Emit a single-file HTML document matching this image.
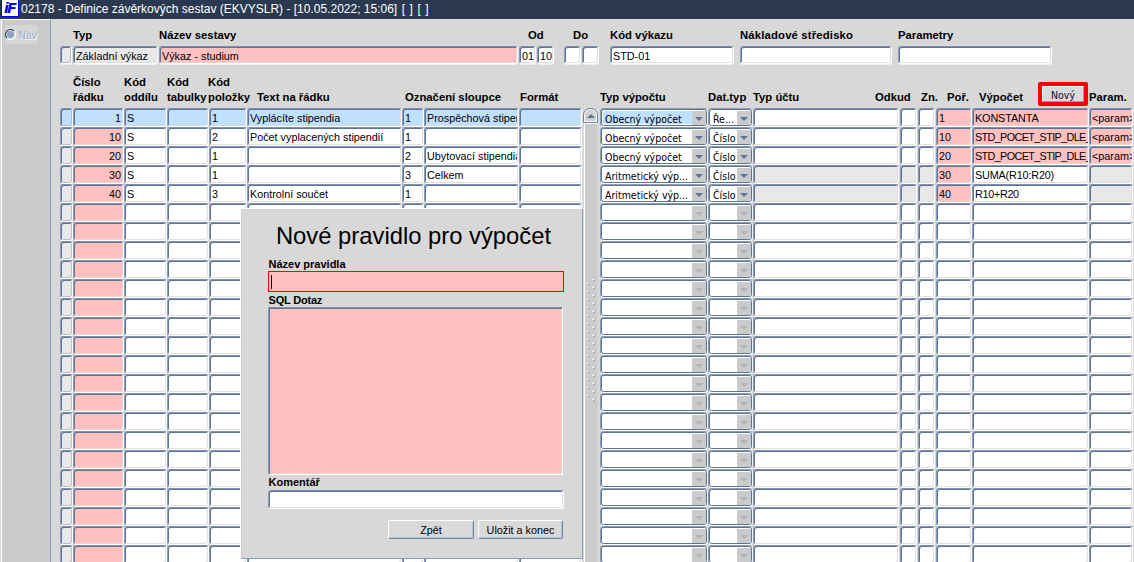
<!DOCTYPE html>
<html lang="cs"><head><meta charset="utf-8"><title>02178 - Definice závěrkových sestav</title>
<style>
html,body{margin:0;padding:0}
body{width:1134px;height:562px;overflow:hidden;background:#d8d8d8;font-family:"Liberation Sans",Arial,sans-serif;font-size:10.8px;color:#000;position:relative}
div,span{box-sizing:border-box}
.a{position:absolute}
#tb{left:0;top:0;width:1134px;height:19px;background:#2b3950;color:#fff;font-size:12px;line-height:17px;white-space:pre}
#ico{left:1px;top:-1px;width:18px;height:18px;background:#fdfdf5;border:1px solid #0000f0;color:#0000ff;font-weight:bold;font-style:italic;font-size:14px;line-height:16px;text-align:center;letter-spacing:-1px;overflow:hidden;text-shadow:.5px 0 0 #0000ff;padding-right:1px}
#lp{left:0;top:19px;width:51px;height:543px;background:#cbcbcb;border-left:1px solid #d8d8d8}
.f{position:absolute;height:19px;border-style:solid;border-width:1px;border-color:#8292ab #fff #fff #8c9cb4;border-radius:3px;background:#fff;box-shadow:inset 1px 1px 0 #5f7494,inset -1px -1px 0 rgba(218,218,218,.85);white-space:nowrap;overflow:hidden;line-height:17px;padding:1px 0 0 2px}
.f u{display:block;overflow:hidden;text-decoration:none;margin-right:1px}
.f.i{box-shadow:inset 1px 1px 0 #5f7494,inset -1px -1px 0 rgba(120,135,160,.4);border-radius:3px}
.f.h.i{box-shadow:inset 1px 1px 0 #5f7494,inset -1px -1px 0 rgba(120,135,160,.45),0 1px 0 rgba(255,255,255,.6)!important}
.f.r{text-align:right;padding-right:2px;padding-left:0}
.f.h{height:18px;line-height:16px;box-shadow:inset 1px 1px 0 #5f7494,inset -1px -1px 0 rgba(218,218,218,.85),0 1px 0 rgba(255,255,255,.6)}
.p{background:#ffc0c0}.b{background:#c0e0ff}.g{background:#e8e8e8}
.l{position:absolute;font-weight:bold;font-size:11.3px;line-height:15px;white-space:nowrap}
.dd{position:absolute;height:17px;border:1px solid #5f7494;border-radius:2.5px;background:#fff;box-shadow:0 1px 0 #fff,1px 0 0 rgba(255,255,255,.65),0 -1px 0 rgba(95,116,148,.6),-1px 0 0 rgba(95,116,148,.6),inset 0 0 0 1px #fff;white-space:nowrap;overflow:hidden;line-height:15px;padding:2px 0 0 3px;font-family:"DejaVu Sans","Liberation Sans",sans-serif;font-stretch:condensed;font-size:10.5px}
.dd.b{background:#c0e0ff}
.dd i{position:absolute;right:0;top:1px;bottom:0;width:14px;background:#cbcbcb}
.dd i:after{content:"";position:absolute;left:3px;top:6px;border-left:4px solid transparent;border-right:4px solid transparent;border-top:4px solid #5e7596}
.dd.e i:after{border-top-color:#b4b4b4}
</style></head>
<body>
<div id="tb" class="a"><span class="a" style="left:21px;top:1px">02178 - Definice závěrkových sestav (EKVYSLR) - [10.05.2022; 15:06]<span style="word-spacing:1.2px"> [ ] [ ]</span></span></div>
<div id="ico" class="a">iF</div>
<div id="lp" class="a"></div>
<div class="a" style="left:1px;top:19px;width:1px;height:543px;background:#fff"></div>
<div class="a" style="left:1px;top:19px;width:49px;height:1px;background:#fff"></div>
<div class="a" style="left:50px;top:20px;width:1px;height:542px;background:#8799b5"></div>
<div class="a" style="left:5px;top:25px;width:32px;height:19px;background:#d6d6d6"></div>
<div class="a" style="left:5px;top:29px;width:11px;height:11px;border-radius:50%;background:#8ea3c0;border:1px solid;border-color:#2a3850 #fff #fff #2a3850;box-shadow:0 0 0 1px #dcdcdc inset"></div>
<div class="a" style="left:18.5px;top:28px;font-size:10.3px;line-height:15px;color:#8fa6c8;text-shadow:1px 1px 0 #fff">Nav</div>
<div class="l" style="left:73px;top:28px">Typ</div>
<div class="l" style="left:159px;top:28px">Název sestavy</div>
<div class="l" style="left:528px;top:28px">Od</div>
<div class="l" style="left:573px;top:28px">Do</div>
<div class="l" style="left:610px;top:28px">Kód výkazu</div>
<div class="l" style="left:740px;top:28px;letter-spacing:.17px">Nákladové středisko</div>
<div class="l" style="left:898px;top:28px">Parametry</div>
<div class="f g h i" style="left:60px;top:46px;width:12px"></div>
<div class="f g h" style="left:73px;top:46px;width:85px">Základní výkaz</div>
<div class="f p h" style="left:159px;top:46px;width:359px">Výkaz - studium</div>
<div class="f h" style="left:519px;top:46px;width:17px">01</div>
<div class="f h" style="left:537px;top:46px;width:17px">10</div>
<div class="f h" style="left:564px;top:46px;width:17px"></div>
<div class="f h" style="left:582px;top:46px;width:17px"></div>
<div class="f h" style="left:610px;top:46px;width:124px">STD-01</div>
<div class="f h" style="left:740px;top:46px;width:152px"></div>
<div class="f h" style="left:898px;top:46px;width:154px"></div>
<div class="l" style="left:73px;top:75px">Číslo</div>
<div class="l" style="left:73px;top:90px">řádku</div>
<div class="l" style="left:124px;top:75px">Kód</div>
<div class="l" style="left:124px;top:90px">oddílu</div>
<div class="l" style="left:167px;top:75px">Kód</div>
<div class="l" style="left:167px;top:90px">tabulky</div>
<div class="l" style="left:208px;top:75px">Kód</div>
<div class="l" style="left:208px;top:90px">položky</div>
<div class="l" style="left:257px;top:90px">Text na řádku</div>
<div class="l" style="left:405px;top:90px">Označení sloupce</div>
<div class="l" style="left:520px;top:90px">Formát</div>
<div class="l" style="left:600px;top:90px">Typ výpočtu</div>
<div class="l" style="left:708px;top:90px">Dat.typ</div>
<div class="l" style="left:753px;top:90px">Typ účtu</div>
<div class="l" style="left:875px;top:90px">Odkud</div>
<div class="l" style="left:921px;top:90px">Zn.</div>
<div class="l" style="left:947px;top:90px">Poř.</div>
<div class="l" style="left:979px;top:90px">Výpočet</div>
<div class="l" style="left:1089px;top:90px">Param.</div>
<div class="f b i" style="left:60px;top:108px;width:13px"></div>
<div class="f b r" style="left:73px;top:108px;width:51px">1</div>
<div class="f b" style="left:124px;top:108px;width:43px">S</div>
<div class="f b" style="left:167px;top:108px;width:42px"></div>
<div class="f b" style="left:209px;top:108px;width:38px">1</div>
<div class="f b" style="left:247px;top:108px;width:155px">Vyplácíte stipendia</div>
<div class="f b" style="left:402px;top:108px;width:22px">1</div>
<div class="f b" style="left:424px;top:108px;width:95px"><u>Prospěchová stipendia</u></div>
<div class="f b" style="left:519px;top:108px;width:63px"></div>
<div class="dd b" style="left:601px;top:109px;width:106px">Obecný výpočet<i></i></div>
<div class="dd " style="left:709px;top:109px;width:43px">Ře...<i></i></div>
<div class="f " style="left:753px;top:108px;width:146px"></div>
<div class="f " style="left:900px;top:108px;width:17px"></div>
<div class="f " style="left:918px;top:108px;width:17px"></div>
<div class="f p" style="left:936px;top:108px;width:36px">1</div>
<div class="f p" style="left:972px;top:108px;width:117px"><span style="letter-spacing:-.1px">KONSTANTA</span></div>
<div class="f p" style="left:1089px;top:108px;width:44px">&lt;param&gt;</div>
<div class="f g i" style="left:60px;top:127px;width:13px"></div>
<div class="f p r" style="left:73px;top:127px;width:51px">10</div>
<div class="f " style="left:124px;top:127px;width:43px">S</div>
<div class="f " style="left:167px;top:127px;width:42px"></div>
<div class="f " style="left:209px;top:127px;width:38px">2</div>
<div class="f " style="left:247px;top:127px;width:155px">Počet vyplacených stipendií</div>
<div class="f " style="left:402px;top:127px;width:22px">1</div>
<div class="f " style="left:424px;top:127px;width:95px"></div>
<div class="f " style="left:519px;top:127px;width:63px"></div>
<div class="dd " style="left:601px;top:128px;width:106px">Obecný výpočet<i></i></div>
<div class="dd " style="left:709px;top:128px;width:43px">Číslo<i></i></div>
<div class="f " style="left:753px;top:127px;width:146px"></div>
<div class="f " style="left:900px;top:127px;width:17px"></div>
<div class="f " style="left:918px;top:127px;width:17px"></div>
<div class="f p" style="left:936px;top:127px;width:36px">10</div>
<div class="f p" style="left:972px;top:127px;width:117px"><span style="letter-spacing:-.62px">STD_POCET_STIP_DLE_</span></div>
<div class="f p" style="left:1089px;top:127px;width:44px">&lt;param&gt;</div>
<div class="f g i" style="left:60px;top:146px;width:13px"></div>
<div class="f p r" style="left:73px;top:146px;width:51px">20</div>
<div class="f " style="left:124px;top:146px;width:43px">S</div>
<div class="f " style="left:167px;top:146px;width:42px"></div>
<div class="f " style="left:209px;top:146px;width:38px">1</div>
<div class="f " style="left:247px;top:146px;width:155px"></div>
<div class="f " style="left:402px;top:146px;width:22px">2</div>
<div class="f " style="left:424px;top:146px;width:95px"><u>Ubytovací stipendia</u></div>
<div class="f " style="left:519px;top:146px;width:63px"></div>
<div class="dd " style="left:601px;top:147px;width:106px">Obecný výpočet<i></i></div>
<div class="dd " style="left:709px;top:147px;width:43px">Číslo<i></i></div>
<div class="f " style="left:753px;top:146px;width:146px"></div>
<div class="f " style="left:900px;top:146px;width:17px"></div>
<div class="f " style="left:918px;top:146px;width:17px"></div>
<div class="f p" style="left:936px;top:146px;width:36px">20</div>
<div class="f p" style="left:972px;top:146px;width:117px"><span style="letter-spacing:-.62px">STD_POCET_STIP_DLE_</span></div>
<div class="f p" style="left:1089px;top:146px;width:44px">&lt;param&gt;</div>
<div class="f g i" style="left:60px;top:165px;width:13px"></div>
<div class="f p r" style="left:73px;top:165px;width:51px">30</div>
<div class="f " style="left:124px;top:165px;width:43px">S</div>
<div class="f " style="left:167px;top:165px;width:42px"></div>
<div class="f " style="left:209px;top:165px;width:38px">1</div>
<div class="f " style="left:247px;top:165px;width:155px"></div>
<div class="f " style="left:402px;top:165px;width:22px">3</div>
<div class="f " style="left:424px;top:165px;width:95px">Celkem</div>
<div class="f " style="left:519px;top:165px;width:63px"></div>
<div class="dd " style="left:601px;top:166px;width:106px">Aritmetický výp...<i></i></div>
<div class="dd " style="left:709px;top:166px;width:43px">Číslo<i></i></div>
<div class="f g" style="left:753px;top:165px;width:146px"></div>
<div class="f g" style="left:900px;top:165px;width:17px"></div>
<div class="f g" style="left:918px;top:165px;width:17px"></div>
<div class="f p" style="left:936px;top:165px;width:36px">30</div>
<div class="f " style="left:972px;top:165px;width:117px"><span style="letter-spacing:-.15px">SUMA(R10:R20)</span></div>
<div class="f g" style="left:1089px;top:165px;width:44px"></div>
<div class="f g i" style="left:60px;top:184px;width:13px"></div>
<div class="f p r" style="left:73px;top:184px;width:51px">40</div>
<div class="f " style="left:124px;top:184px;width:43px">S</div>
<div class="f " style="left:167px;top:184px;width:42px"></div>
<div class="f " style="left:209px;top:184px;width:38px">3</div>
<div class="f " style="left:247px;top:184px;width:155px">Kontrolní součet</div>
<div class="f " style="left:402px;top:184px;width:22px">1</div>
<div class="f " style="left:424px;top:184px;width:95px"></div>
<div class="f " style="left:519px;top:184px;width:63px"></div>
<div class="dd " style="left:601px;top:185px;width:106px">Aritmetický výp...<i></i></div>
<div class="dd " style="left:709px;top:185px;width:43px">Číslo<i></i></div>
<div class="f g" style="left:753px;top:184px;width:146px"></div>
<div class="f g" style="left:900px;top:184px;width:17px"></div>
<div class="f g" style="left:918px;top:184px;width:17px"></div>
<div class="f p" style="left:936px;top:184px;width:36px">40</div>
<div class="f " style="left:972px;top:184px;width:117px"><span style="letter-spacing:-.3px">R10+R20</span></div>
<div class="f g" style="left:1089px;top:184px;width:44px"></div>
<div class="f g i" style="left:60px;top:203px;width:13px"></div>
<div class="f p r" style="left:73px;top:203px;width:51px"></div>
<div class="f " style="left:124px;top:203px;width:43px"></div>
<div class="f " style="left:167px;top:203px;width:42px"></div>
<div class="f " style="left:209px;top:203px;width:38px"></div>
<div class="f " style="left:247px;top:203px;width:155px"></div>
<div class="f " style="left:402px;top:203px;width:22px"></div>
<div class="f " style="left:424px;top:203px;width:95px"></div>
<div class="f " style="left:519px;top:203px;width:63px"></div>
<div class="dd  e" style="left:601px;top:204px;width:106px"><i></i></div>
<div class="dd  e" style="left:709px;top:204px;width:43px"><i></i></div>
<div class="f " style="left:753px;top:203px;width:146px"></div>
<div class="f " style="left:900px;top:203px;width:17px"></div>
<div class="f " style="left:918px;top:203px;width:17px"></div>
<div class="f " style="left:936px;top:203px;width:36px"></div>
<div class="f " style="left:972px;top:203px;width:117px"></div>
<div class="f " style="left:1089px;top:203px;width:44px"></div>
<div class="f g i" style="left:60px;top:222px;width:13px"></div>
<div class="f p r" style="left:73px;top:222px;width:51px"></div>
<div class="f " style="left:124px;top:222px;width:43px"></div>
<div class="f " style="left:167px;top:222px;width:42px"></div>
<div class="f " style="left:209px;top:222px;width:38px"></div>
<div class="f " style="left:247px;top:222px;width:155px"></div>
<div class="f " style="left:402px;top:222px;width:22px"></div>
<div class="f " style="left:424px;top:222px;width:95px"></div>
<div class="f " style="left:519px;top:222px;width:63px"></div>
<div class="dd  e" style="left:601px;top:223px;width:106px"><i></i></div>
<div class="dd  e" style="left:709px;top:223px;width:43px"><i></i></div>
<div class="f " style="left:753px;top:222px;width:146px"></div>
<div class="f " style="left:900px;top:222px;width:17px"></div>
<div class="f " style="left:918px;top:222px;width:17px"></div>
<div class="f " style="left:936px;top:222px;width:36px"></div>
<div class="f " style="left:972px;top:222px;width:117px"></div>
<div class="f " style="left:1089px;top:222px;width:44px"></div>
<div class="f g i" style="left:60px;top:241px;width:13px"></div>
<div class="f p r" style="left:73px;top:241px;width:51px"></div>
<div class="f " style="left:124px;top:241px;width:43px"></div>
<div class="f " style="left:167px;top:241px;width:42px"></div>
<div class="f " style="left:209px;top:241px;width:38px"></div>
<div class="f " style="left:247px;top:241px;width:155px"></div>
<div class="f " style="left:402px;top:241px;width:22px"></div>
<div class="f " style="left:424px;top:241px;width:95px"></div>
<div class="f " style="left:519px;top:241px;width:63px"></div>
<div class="dd  e" style="left:601px;top:242px;width:106px"><i></i></div>
<div class="dd  e" style="left:709px;top:242px;width:43px"><i></i></div>
<div class="f " style="left:753px;top:241px;width:146px"></div>
<div class="f " style="left:900px;top:241px;width:17px"></div>
<div class="f " style="left:918px;top:241px;width:17px"></div>
<div class="f " style="left:936px;top:241px;width:36px"></div>
<div class="f " style="left:972px;top:241px;width:117px"></div>
<div class="f " style="left:1089px;top:241px;width:44px"></div>
<div class="f g i" style="left:60px;top:260px;width:13px"></div>
<div class="f p r" style="left:73px;top:260px;width:51px"></div>
<div class="f " style="left:124px;top:260px;width:43px"></div>
<div class="f " style="left:167px;top:260px;width:42px"></div>
<div class="f " style="left:209px;top:260px;width:38px"></div>
<div class="f " style="left:247px;top:260px;width:155px"></div>
<div class="f " style="left:402px;top:260px;width:22px"></div>
<div class="f " style="left:424px;top:260px;width:95px"></div>
<div class="f " style="left:519px;top:260px;width:63px"></div>
<div class="dd  e" style="left:601px;top:261px;width:106px"><i></i></div>
<div class="dd  e" style="left:709px;top:261px;width:43px"><i></i></div>
<div class="f " style="left:753px;top:260px;width:146px"></div>
<div class="f " style="left:900px;top:260px;width:17px"></div>
<div class="f " style="left:918px;top:260px;width:17px"></div>
<div class="f " style="left:936px;top:260px;width:36px"></div>
<div class="f " style="left:972px;top:260px;width:117px"></div>
<div class="f " style="left:1089px;top:260px;width:44px"></div>
<div class="f g i" style="left:60px;top:279px;width:13px"></div>
<div class="f p r" style="left:73px;top:279px;width:51px"></div>
<div class="f " style="left:124px;top:279px;width:43px"></div>
<div class="f " style="left:167px;top:279px;width:42px"></div>
<div class="f " style="left:209px;top:279px;width:38px"></div>
<div class="f " style="left:247px;top:279px;width:155px"></div>
<div class="f " style="left:402px;top:279px;width:22px"></div>
<div class="f " style="left:424px;top:279px;width:95px"></div>
<div class="f " style="left:519px;top:279px;width:63px"></div>
<div class="dd  e" style="left:601px;top:280px;width:106px"><i></i></div>
<div class="dd  e" style="left:709px;top:280px;width:43px"><i></i></div>
<div class="f " style="left:753px;top:279px;width:146px"></div>
<div class="f " style="left:900px;top:279px;width:17px"></div>
<div class="f " style="left:918px;top:279px;width:17px"></div>
<div class="f " style="left:936px;top:279px;width:36px"></div>
<div class="f " style="left:972px;top:279px;width:117px"></div>
<div class="f " style="left:1089px;top:279px;width:44px"></div>
<div class="f g i" style="left:60px;top:298px;width:13px"></div>
<div class="f p r" style="left:73px;top:298px;width:51px"></div>
<div class="f " style="left:124px;top:298px;width:43px"></div>
<div class="f " style="left:167px;top:298px;width:42px"></div>
<div class="f " style="left:209px;top:298px;width:38px"></div>
<div class="f " style="left:247px;top:298px;width:155px"></div>
<div class="f " style="left:402px;top:298px;width:22px"></div>
<div class="f " style="left:424px;top:298px;width:95px"></div>
<div class="f " style="left:519px;top:298px;width:63px"></div>
<div class="dd  e" style="left:601px;top:299px;width:106px"><i></i></div>
<div class="dd  e" style="left:709px;top:299px;width:43px"><i></i></div>
<div class="f " style="left:753px;top:298px;width:146px"></div>
<div class="f " style="left:900px;top:298px;width:17px"></div>
<div class="f " style="left:918px;top:298px;width:17px"></div>
<div class="f " style="left:936px;top:298px;width:36px"></div>
<div class="f " style="left:972px;top:298px;width:117px"></div>
<div class="f " style="left:1089px;top:298px;width:44px"></div>
<div class="f g i" style="left:60px;top:317px;width:13px"></div>
<div class="f p r" style="left:73px;top:317px;width:51px"></div>
<div class="f " style="left:124px;top:317px;width:43px"></div>
<div class="f " style="left:167px;top:317px;width:42px"></div>
<div class="f " style="left:209px;top:317px;width:38px"></div>
<div class="f " style="left:247px;top:317px;width:155px"></div>
<div class="f " style="left:402px;top:317px;width:22px"></div>
<div class="f " style="left:424px;top:317px;width:95px"></div>
<div class="f " style="left:519px;top:317px;width:63px"></div>
<div class="dd  e" style="left:601px;top:318px;width:106px"><i></i></div>
<div class="dd  e" style="left:709px;top:318px;width:43px"><i></i></div>
<div class="f " style="left:753px;top:317px;width:146px"></div>
<div class="f " style="left:900px;top:317px;width:17px"></div>
<div class="f " style="left:918px;top:317px;width:17px"></div>
<div class="f " style="left:936px;top:317px;width:36px"></div>
<div class="f " style="left:972px;top:317px;width:117px"></div>
<div class="f " style="left:1089px;top:317px;width:44px"></div>
<div class="f g i" style="left:60px;top:336px;width:13px"></div>
<div class="f p r" style="left:73px;top:336px;width:51px"></div>
<div class="f " style="left:124px;top:336px;width:43px"></div>
<div class="f " style="left:167px;top:336px;width:42px"></div>
<div class="f " style="left:209px;top:336px;width:38px"></div>
<div class="f " style="left:247px;top:336px;width:155px"></div>
<div class="f " style="left:402px;top:336px;width:22px"></div>
<div class="f " style="left:424px;top:336px;width:95px"></div>
<div class="f " style="left:519px;top:336px;width:63px"></div>
<div class="dd  e" style="left:601px;top:337px;width:106px"><i></i></div>
<div class="dd  e" style="left:709px;top:337px;width:43px"><i></i></div>
<div class="f " style="left:753px;top:336px;width:146px"></div>
<div class="f " style="left:900px;top:336px;width:17px"></div>
<div class="f " style="left:918px;top:336px;width:17px"></div>
<div class="f " style="left:936px;top:336px;width:36px"></div>
<div class="f " style="left:972px;top:336px;width:117px"></div>
<div class="f " style="left:1089px;top:336px;width:44px"></div>
<div class="f g i" style="left:60px;top:355px;width:13px"></div>
<div class="f p r" style="left:73px;top:355px;width:51px"></div>
<div class="f " style="left:124px;top:355px;width:43px"></div>
<div class="f " style="left:167px;top:355px;width:42px"></div>
<div class="f " style="left:209px;top:355px;width:38px"></div>
<div class="f " style="left:247px;top:355px;width:155px"></div>
<div class="f " style="left:402px;top:355px;width:22px"></div>
<div class="f " style="left:424px;top:355px;width:95px"></div>
<div class="f " style="left:519px;top:355px;width:63px"></div>
<div class="dd  e" style="left:601px;top:356px;width:106px"><i></i></div>
<div class="dd  e" style="left:709px;top:356px;width:43px"><i></i></div>
<div class="f " style="left:753px;top:355px;width:146px"></div>
<div class="f " style="left:900px;top:355px;width:17px"></div>
<div class="f " style="left:918px;top:355px;width:17px"></div>
<div class="f " style="left:936px;top:355px;width:36px"></div>
<div class="f " style="left:972px;top:355px;width:117px"></div>
<div class="f " style="left:1089px;top:355px;width:44px"></div>
<div class="f g i" style="left:60px;top:374px;width:13px"></div>
<div class="f p r" style="left:73px;top:374px;width:51px"></div>
<div class="f " style="left:124px;top:374px;width:43px"></div>
<div class="f " style="left:167px;top:374px;width:42px"></div>
<div class="f " style="left:209px;top:374px;width:38px"></div>
<div class="f " style="left:247px;top:374px;width:155px"></div>
<div class="f " style="left:402px;top:374px;width:22px"></div>
<div class="f " style="left:424px;top:374px;width:95px"></div>
<div class="f " style="left:519px;top:374px;width:63px"></div>
<div class="dd  e" style="left:601px;top:375px;width:106px"><i></i></div>
<div class="dd  e" style="left:709px;top:375px;width:43px"><i></i></div>
<div class="f " style="left:753px;top:374px;width:146px"></div>
<div class="f " style="left:900px;top:374px;width:17px"></div>
<div class="f " style="left:918px;top:374px;width:17px"></div>
<div class="f " style="left:936px;top:374px;width:36px"></div>
<div class="f " style="left:972px;top:374px;width:117px"></div>
<div class="f " style="left:1089px;top:374px;width:44px"></div>
<div class="f g i" style="left:60px;top:393px;width:13px"></div>
<div class="f p r" style="left:73px;top:393px;width:51px"></div>
<div class="f " style="left:124px;top:393px;width:43px"></div>
<div class="f " style="left:167px;top:393px;width:42px"></div>
<div class="f " style="left:209px;top:393px;width:38px"></div>
<div class="f " style="left:247px;top:393px;width:155px"></div>
<div class="f " style="left:402px;top:393px;width:22px"></div>
<div class="f " style="left:424px;top:393px;width:95px"></div>
<div class="f " style="left:519px;top:393px;width:63px"></div>
<div class="dd  e" style="left:601px;top:394px;width:106px"><i></i></div>
<div class="dd  e" style="left:709px;top:394px;width:43px"><i></i></div>
<div class="f " style="left:753px;top:393px;width:146px"></div>
<div class="f " style="left:900px;top:393px;width:17px"></div>
<div class="f " style="left:918px;top:393px;width:17px"></div>
<div class="f " style="left:936px;top:393px;width:36px"></div>
<div class="f " style="left:972px;top:393px;width:117px"></div>
<div class="f " style="left:1089px;top:393px;width:44px"></div>
<div class="f g i" style="left:60px;top:412px;width:13px"></div>
<div class="f p r" style="left:73px;top:412px;width:51px"></div>
<div class="f " style="left:124px;top:412px;width:43px"></div>
<div class="f " style="left:167px;top:412px;width:42px"></div>
<div class="f " style="left:209px;top:412px;width:38px"></div>
<div class="f " style="left:247px;top:412px;width:155px"></div>
<div class="f " style="left:402px;top:412px;width:22px"></div>
<div class="f " style="left:424px;top:412px;width:95px"></div>
<div class="f " style="left:519px;top:412px;width:63px"></div>
<div class="dd  e" style="left:601px;top:413px;width:106px"><i></i></div>
<div class="dd  e" style="left:709px;top:413px;width:43px"><i></i></div>
<div class="f " style="left:753px;top:412px;width:146px"></div>
<div class="f " style="left:900px;top:412px;width:17px"></div>
<div class="f " style="left:918px;top:412px;width:17px"></div>
<div class="f " style="left:936px;top:412px;width:36px"></div>
<div class="f " style="left:972px;top:412px;width:117px"></div>
<div class="f " style="left:1089px;top:412px;width:44px"></div>
<div class="f g i" style="left:60px;top:431px;width:13px"></div>
<div class="f p r" style="left:73px;top:431px;width:51px"></div>
<div class="f " style="left:124px;top:431px;width:43px"></div>
<div class="f " style="left:167px;top:431px;width:42px"></div>
<div class="f " style="left:209px;top:431px;width:38px"></div>
<div class="f " style="left:247px;top:431px;width:155px"></div>
<div class="f " style="left:402px;top:431px;width:22px"></div>
<div class="f " style="left:424px;top:431px;width:95px"></div>
<div class="f " style="left:519px;top:431px;width:63px"></div>
<div class="dd  e" style="left:601px;top:432px;width:106px"><i></i></div>
<div class="dd  e" style="left:709px;top:432px;width:43px"><i></i></div>
<div class="f " style="left:753px;top:431px;width:146px"></div>
<div class="f " style="left:900px;top:431px;width:17px"></div>
<div class="f " style="left:918px;top:431px;width:17px"></div>
<div class="f " style="left:936px;top:431px;width:36px"></div>
<div class="f " style="left:972px;top:431px;width:117px"></div>
<div class="f " style="left:1089px;top:431px;width:44px"></div>
<div class="f g i" style="left:60px;top:450px;width:13px"></div>
<div class="f p r" style="left:73px;top:450px;width:51px"></div>
<div class="f " style="left:124px;top:450px;width:43px"></div>
<div class="f " style="left:167px;top:450px;width:42px"></div>
<div class="f " style="left:209px;top:450px;width:38px"></div>
<div class="f " style="left:247px;top:450px;width:155px"></div>
<div class="f " style="left:402px;top:450px;width:22px"></div>
<div class="f " style="left:424px;top:450px;width:95px"></div>
<div class="f " style="left:519px;top:450px;width:63px"></div>
<div class="dd  e" style="left:601px;top:451px;width:106px"><i></i></div>
<div class="dd  e" style="left:709px;top:451px;width:43px"><i></i></div>
<div class="f " style="left:753px;top:450px;width:146px"></div>
<div class="f " style="left:900px;top:450px;width:17px"></div>
<div class="f " style="left:918px;top:450px;width:17px"></div>
<div class="f " style="left:936px;top:450px;width:36px"></div>
<div class="f " style="left:972px;top:450px;width:117px"></div>
<div class="f " style="left:1089px;top:450px;width:44px"></div>
<div class="f g i" style="left:60px;top:469px;width:13px"></div>
<div class="f p r" style="left:73px;top:469px;width:51px"></div>
<div class="f " style="left:124px;top:469px;width:43px"></div>
<div class="f " style="left:167px;top:469px;width:42px"></div>
<div class="f " style="left:209px;top:469px;width:38px"></div>
<div class="f " style="left:247px;top:469px;width:155px"></div>
<div class="f " style="left:402px;top:469px;width:22px"></div>
<div class="f " style="left:424px;top:469px;width:95px"></div>
<div class="f " style="left:519px;top:469px;width:63px"></div>
<div class="dd  e" style="left:601px;top:470px;width:106px"><i></i></div>
<div class="dd  e" style="left:709px;top:470px;width:43px"><i></i></div>
<div class="f " style="left:753px;top:469px;width:146px"></div>
<div class="f " style="left:900px;top:469px;width:17px"></div>
<div class="f " style="left:918px;top:469px;width:17px"></div>
<div class="f " style="left:936px;top:469px;width:36px"></div>
<div class="f " style="left:972px;top:469px;width:117px"></div>
<div class="f " style="left:1089px;top:469px;width:44px"></div>
<div class="f g i" style="left:60px;top:488px;width:13px"></div>
<div class="f p r" style="left:73px;top:488px;width:51px"></div>
<div class="f " style="left:124px;top:488px;width:43px"></div>
<div class="f " style="left:167px;top:488px;width:42px"></div>
<div class="f " style="left:209px;top:488px;width:38px"></div>
<div class="f " style="left:247px;top:488px;width:155px"></div>
<div class="f " style="left:402px;top:488px;width:22px"></div>
<div class="f " style="left:424px;top:488px;width:95px"></div>
<div class="f " style="left:519px;top:488px;width:63px"></div>
<div class="dd  e" style="left:601px;top:489px;width:106px"><i></i></div>
<div class="dd  e" style="left:709px;top:489px;width:43px"><i></i></div>
<div class="f " style="left:753px;top:488px;width:146px"></div>
<div class="f " style="left:900px;top:488px;width:17px"></div>
<div class="f " style="left:918px;top:488px;width:17px"></div>
<div class="f " style="left:936px;top:488px;width:36px"></div>
<div class="f " style="left:972px;top:488px;width:117px"></div>
<div class="f " style="left:1089px;top:488px;width:44px"></div>
<div class="f g i" style="left:60px;top:507px;width:13px"></div>
<div class="f p r" style="left:73px;top:507px;width:51px"></div>
<div class="f " style="left:124px;top:507px;width:43px"></div>
<div class="f " style="left:167px;top:507px;width:42px"></div>
<div class="f " style="left:209px;top:507px;width:38px"></div>
<div class="f " style="left:247px;top:507px;width:155px"></div>
<div class="f " style="left:402px;top:507px;width:22px"></div>
<div class="f " style="left:424px;top:507px;width:95px"></div>
<div class="f " style="left:519px;top:507px;width:63px"></div>
<div class="dd  e" style="left:601px;top:508px;width:106px"><i></i></div>
<div class="dd  e" style="left:709px;top:508px;width:43px"><i></i></div>
<div class="f " style="left:753px;top:507px;width:146px"></div>
<div class="f " style="left:900px;top:507px;width:17px"></div>
<div class="f " style="left:918px;top:507px;width:17px"></div>
<div class="f " style="left:936px;top:507px;width:36px"></div>
<div class="f " style="left:972px;top:507px;width:117px"></div>
<div class="f " style="left:1089px;top:507px;width:44px"></div>
<div class="f g i" style="left:60px;top:526px;width:13px"></div>
<div class="f p r" style="left:73px;top:526px;width:51px"></div>
<div class="f " style="left:124px;top:526px;width:43px"></div>
<div class="f " style="left:167px;top:526px;width:42px"></div>
<div class="f " style="left:209px;top:526px;width:38px"></div>
<div class="f " style="left:247px;top:526px;width:155px"></div>
<div class="f " style="left:402px;top:526px;width:22px"></div>
<div class="f " style="left:424px;top:526px;width:95px"></div>
<div class="f " style="left:519px;top:526px;width:63px"></div>
<div class="dd  e" style="left:601px;top:527px;width:106px"><i></i></div>
<div class="dd  e" style="left:709px;top:527px;width:43px"><i></i></div>
<div class="f " style="left:753px;top:526px;width:146px"></div>
<div class="f " style="left:900px;top:526px;width:17px"></div>
<div class="f " style="left:918px;top:526px;width:17px"></div>
<div class="f " style="left:936px;top:526px;width:36px"></div>
<div class="f " style="left:972px;top:526px;width:117px"></div>
<div class="f " style="left:1089px;top:526px;width:44px"></div>
<div class="f g i" style="left:60px;top:545px;width:13px"></div>
<div class="f p r" style="left:73px;top:545px;width:51px"></div>
<div class="f " style="left:124px;top:545px;width:43px"></div>
<div class="f " style="left:167px;top:545px;width:42px"></div>
<div class="f " style="left:209px;top:545px;width:38px"></div>
<div class="f " style="left:247px;top:545px;width:155px"></div>
<div class="f " style="left:402px;top:545px;width:22px"></div>
<div class="f " style="left:424px;top:545px;width:95px"></div>
<div class="f " style="left:519px;top:545px;width:63px"></div>
<div class="dd  e" style="left:601px;top:546px;width:106px"><i></i></div>
<div class="dd  e" style="left:709px;top:546px;width:43px"><i></i></div>
<div class="f " style="left:753px;top:545px;width:146px"></div>
<div class="f " style="left:900px;top:545px;width:17px"></div>
<div class="f " style="left:918px;top:545px;width:17px"></div>
<div class="f " style="left:936px;top:545px;width:36px"></div>
<div class="f " style="left:972px;top:545px;width:117px"></div>
<div class="f " style="left:1089px;top:545px;width:44px"></div>
<div class="a" style="left:584px;top:123px;width:14px;height:439px;background:#cbcbcb;border-left:1px solid #fff;border-top:1px solid #fff;border-right:1px solid #d4d4d4"></div>
<div class="a" style="left:583px;top:108px;width:15px;height:15px;background:#d0d0d0;border:1px solid #6f84a3;border-radius:7px 7px 0 0;box-shadow:inset 0 0 0 1px #fff"></div>
<div class="a" style="left:586.5px;top:114px;width:0;height:0;border-left:4px solid transparent;border-right:4px solid transparent;border-bottom:4px solid #5e7596"></div>
<svg class="a" style="left:0;top:0" width="1134" height="562"><rect x="592" y="279" width="1" height="1" fill="#fff"/><rect x="593" y="279" width="1" height="1" fill="#fff" opacity=".75"/><rect x="592" y="280" width="1" height="1" fill="#fff" opacity=".75"/><rect x="593" y="280" width="1" height="1" fill="#5e7596"/><rect x="592" y="287" width="1" height="1" fill="#fff"/><rect x="593" y="287" width="1" height="1" fill="#fff" opacity=".75"/><rect x="592" y="288" width="1" height="1" fill="#fff" opacity=".75"/><rect x="593" y="288" width="1" height="1" fill="#5e7596"/><rect x="592" y="295" width="1" height="1" fill="#fff"/><rect x="593" y="295" width="1" height="1" fill="#fff" opacity=".75"/><rect x="592" y="296" width="1" height="1" fill="#fff" opacity=".75"/><rect x="593" y="296" width="1" height="1" fill="#5e7596"/><rect x="592" y="303" width="1" height="1" fill="#fff"/><rect x="593" y="303" width="1" height="1" fill="#fff" opacity=".75"/><rect x="592" y="304" width="1" height="1" fill="#fff" opacity=".75"/><rect x="593" y="304" width="1" height="1" fill="#5e7596"/><rect x="592" y="311" width="1" height="1" fill="#fff"/><rect x="593" y="311" width="1" height="1" fill="#fff" opacity=".75"/><rect x="592" y="312" width="1" height="1" fill="#fff" opacity=".75"/><rect x="593" y="312" width="1" height="1" fill="#5e7596"/><rect x="592" y="319" width="1" height="1" fill="#fff"/><rect x="593" y="319" width="1" height="1" fill="#fff" opacity=".75"/><rect x="592" y="320" width="1" height="1" fill="#fff" opacity=".75"/><rect x="593" y="320" width="1" height="1" fill="#5e7596"/><rect x="592" y="327" width="1" height="1" fill="#fff"/><rect x="593" y="327" width="1" height="1" fill="#fff" opacity=".75"/><rect x="592" y="328" width="1" height="1" fill="#fff" opacity=".75"/><rect x="593" y="328" width="1" height="1" fill="#5e7596"/><rect x="592" y="335" width="1" height="1" fill="#fff"/><rect x="593" y="335" width="1" height="1" fill="#fff" opacity=".75"/><rect x="592" y="336" width="1" height="1" fill="#fff" opacity=".75"/><rect x="593" y="336" width="1" height="1" fill="#5e7596"/><rect x="592" y="343" width="1" height="1" fill="#fff"/><rect x="593" y="343" width="1" height="1" fill="#fff" opacity=".75"/><rect x="592" y="344" width="1" height="1" fill="#fff" opacity=".75"/><rect x="593" y="344" width="1" height="1" fill="#5e7596"/><rect x="592" y="351" width="1" height="1" fill="#fff"/><rect x="593" y="351" width="1" height="1" fill="#fff" opacity=".75"/><rect x="592" y="352" width="1" height="1" fill="#fff" opacity=".75"/><rect x="593" y="352" width="1" height="1" fill="#5e7596"/><rect x="592" y="359" width="1" height="1" fill="#fff"/><rect x="593" y="359" width="1" height="1" fill="#fff" opacity=".75"/><rect x="592" y="360" width="1" height="1" fill="#fff" opacity=".75"/><rect x="593" y="360" width="1" height="1" fill="#5e7596"/><rect x="592" y="367" width="1" height="1" fill="#fff"/><rect x="593" y="367" width="1" height="1" fill="#fff" opacity=".75"/><rect x="592" y="368" width="1" height="1" fill="#fff" opacity=".75"/><rect x="593" y="368" width="1" height="1" fill="#5e7596"/><rect x="592" y="375" width="1" height="1" fill="#fff"/><rect x="593" y="375" width="1" height="1" fill="#fff" opacity=".75"/><rect x="592" y="376" width="1" height="1" fill="#fff" opacity=".75"/><rect x="593" y="376" width="1" height="1" fill="#5e7596"/><rect x="592" y="383" width="1" height="1" fill="#fff"/><rect x="593" y="383" width="1" height="1" fill="#fff" opacity=".75"/><rect x="592" y="384" width="1" height="1" fill="#fff" opacity=".75"/><rect x="593" y="384" width="1" height="1" fill="#5e7596"/><rect x="592" y="391" width="1" height="1" fill="#fff"/><rect x="593" y="391" width="1" height="1" fill="#fff" opacity=".75"/><rect x="592" y="392" width="1" height="1" fill="#fff" opacity=".75"/><rect x="593" y="392" width="1" height="1" fill="#5e7596"/><rect x="592" y="399" width="1" height="1" fill="#fff"/><rect x="593" y="399" width="1" height="1" fill="#fff" opacity=".75"/><rect x="592" y="400" width="1" height="1" fill="#fff" opacity=".75"/><rect x="593" y="400" width="1" height="1" fill="#5e7596"/><rect x="587" y="283" width="1" height="1" fill="#fff"/><rect x="588" y="283" width="1" height="1" fill="#fff" opacity=".75"/><rect x="587" y="284" width="1" height="1" fill="#fff" opacity=".75"/><rect x="588" y="284" width="1" height="1" fill="#5e7596"/><rect x="587" y="291" width="1" height="1" fill="#fff"/><rect x="588" y="291" width="1" height="1" fill="#fff" opacity=".75"/><rect x="587" y="292" width="1" height="1" fill="#fff" opacity=".75"/><rect x="588" y="292" width="1" height="1" fill="#5e7596"/><rect x="587" y="299" width="1" height="1" fill="#fff"/><rect x="588" y="299" width="1" height="1" fill="#fff" opacity=".75"/><rect x="587" y="300" width="1" height="1" fill="#fff" opacity=".75"/><rect x="588" y="300" width="1" height="1" fill="#5e7596"/><rect x="587" y="307" width="1" height="1" fill="#fff"/><rect x="588" y="307" width="1" height="1" fill="#fff" opacity=".75"/><rect x="587" y="308" width="1" height="1" fill="#fff" opacity=".75"/><rect x="588" y="308" width="1" height="1" fill="#5e7596"/><rect x="587" y="315" width="1" height="1" fill="#fff"/><rect x="588" y="315" width="1" height="1" fill="#fff" opacity=".75"/><rect x="587" y="316" width="1" height="1" fill="#fff" opacity=".75"/><rect x="588" y="316" width="1" height="1" fill="#5e7596"/><rect x="587" y="323" width="1" height="1" fill="#fff"/><rect x="588" y="323" width="1" height="1" fill="#fff" opacity=".75"/><rect x="587" y="324" width="1" height="1" fill="#fff" opacity=".75"/><rect x="588" y="324" width="1" height="1" fill="#5e7596"/><rect x="587" y="331" width="1" height="1" fill="#fff"/><rect x="588" y="331" width="1" height="1" fill="#fff" opacity=".75"/><rect x="587" y="332" width="1" height="1" fill="#fff" opacity=".75"/><rect x="588" y="332" width="1" height="1" fill="#5e7596"/><rect x="587" y="339" width="1" height="1" fill="#fff"/><rect x="588" y="339" width="1" height="1" fill="#fff" opacity=".75"/><rect x="587" y="340" width="1" height="1" fill="#fff" opacity=".75"/><rect x="588" y="340" width="1" height="1" fill="#5e7596"/><rect x="587" y="347" width="1" height="1" fill="#fff"/><rect x="588" y="347" width="1" height="1" fill="#fff" opacity=".75"/><rect x="587" y="348" width="1" height="1" fill="#fff" opacity=".75"/><rect x="588" y="348" width="1" height="1" fill="#5e7596"/><rect x="587" y="355" width="1" height="1" fill="#fff"/><rect x="588" y="355" width="1" height="1" fill="#fff" opacity=".75"/><rect x="587" y="356" width="1" height="1" fill="#fff" opacity=".75"/><rect x="588" y="356" width="1" height="1" fill="#5e7596"/><rect x="587" y="363" width="1" height="1" fill="#fff"/><rect x="588" y="363" width="1" height="1" fill="#fff" opacity=".75"/><rect x="587" y="364" width="1" height="1" fill="#fff" opacity=".75"/><rect x="588" y="364" width="1" height="1" fill="#5e7596"/><rect x="587" y="371" width="1" height="1" fill="#fff"/><rect x="588" y="371" width="1" height="1" fill="#fff" opacity=".75"/><rect x="587" y="372" width="1" height="1" fill="#fff" opacity=".75"/><rect x="588" y="372" width="1" height="1" fill="#5e7596"/><rect x="587" y="379" width="1" height="1" fill="#fff"/><rect x="588" y="379" width="1" height="1" fill="#fff" opacity=".75"/><rect x="587" y="380" width="1" height="1" fill="#fff" opacity=".75"/><rect x="588" y="380" width="1" height="1" fill="#5e7596"/><rect x="587" y="387" width="1" height="1" fill="#fff"/><rect x="588" y="387" width="1" height="1" fill="#fff" opacity=".75"/><rect x="587" y="388" width="1" height="1" fill="#fff" opacity=".75"/><rect x="588" y="388" width="1" height="1" fill="#5e7596"/><rect x="587" y="395" width="1" height="1" fill="#fff"/><rect x="588" y="395" width="1" height="1" fill="#fff" opacity=".75"/><rect x="587" y="396" width="1" height="1" fill="#fff" opacity=".75"/><rect x="588" y="396" width="1" height="1" fill="#5e7596"/></svg>
<div class="a" style="left:1038px;top:82px;width:50px;height:24px;border:4px solid #fb0000;border-radius:2px"></div>
<div class="a" style="left:1042px;top:86px;width:42px;height:16px;background:#dadada;border:1px solid;border-color:#fff #8b9cb6 #8b9cb6 #fff;text-align:center;font-family:DejaVu Sans,Liberation Sans,sans-serif;font-stretch:condensed;font-size:10.5px;line-height:16px;color:#0a0a28">Nový</div>
<div class="a" style="left:241px;top:209px;width:342px;height:350px;background:#d8d8d8;border:1px solid;border-color:#cfcfcf #8a9cb8 #8a9cb8 #cfcfcf;box-shadow:-1px -1px 0 #fff"></div>
<div class="a" style="left:241px;top:221px;width:343px;text-align:center;font-size:23.8px;line-height:30px;white-space:nowrap;padding-left:2px">Nové pravidlo pro výpočet</div>
<div class="l" style="left:268.5px;top:257px;font-size:11px">Název pravidla</div>
<div class="a" style="left:268px;top:271px;width:296px;height:21px;background:#ffc0c0;border:1px solid #f80000"></div>
<div class="a" style="left:271px;top:275px;width:1px;height:14px;background:#000"></div>
<div class="l" style="left:268.5px;top:293px;font-size:11px;letter-spacing:-.2px">SQL Dotaz</div>
<div class="f p" style="left:268px;top:307px;width:295px;height:168px;border-radius:1px"></div>
<div class="l" style="left:268.5px;top:475px;font-size:11px">Komentář</div>
<div class="f " style="left:268px;top:490px;width:296px;height:19px"></div>
<div class="a" style="left:388px;top:520px;width:86px;height:19px;background:#d9d9d9;border:1px solid;border-color:#fff #6f86a6 #6f86a6 #fff;box-shadow:inset -1px -1px 0 #bcc3ce;text-align:center;font-size:10.8px;line-height:17px;border-radius:2px;padding-top:1px">Zpět</div>
<div class="a" style="left:478px;top:520px;width:85px;height:19px;background:#d9d9d9;border:1px solid;border-color:#fff #6f86a6 #6f86a6 #fff;box-shadow:inset -1px -1px 0 #bcc3ce;text-align:center;font-size:10.8px;line-height:17px;border-radius:2px;padding-top:1px">Uložit a konec</div>
</body></html>
